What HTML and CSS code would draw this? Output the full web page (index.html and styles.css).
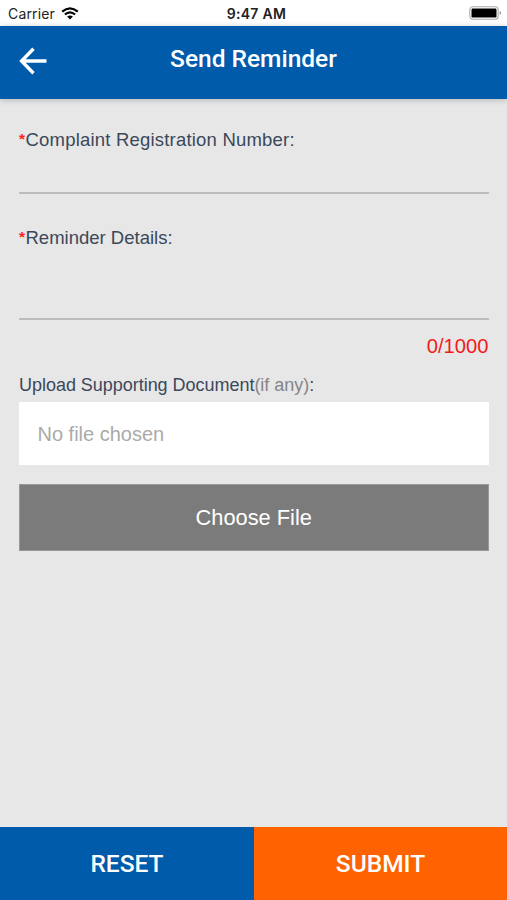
FILE: index.html
```html
<!DOCTYPE html>
<html lang="en">
<head>
<meta charset="utf-8">
<title>Send Reminder</title>
<link rel="stylesheet" href="styles.css">
</head>
<body>
<div class="screen">
  <div class="status">
    <div class="carrier"><span>Carrier</span>
      <svg width="18" height="13" viewBox="0 0 18 13" fill="none" stroke="#000" stroke-width="2.2"><path d="M1.2 4.7Q9-2 16.8 4.7M3.9 7.5Q9 3.1 14.1 7.5"/><path d="M9 12.5L6.1 9.6Q9 7.2 11.9 9.6Z" fill="#000" stroke="none"/></svg>
    </div>
    <time class="time">9:47 AM</time>
    <svg class="battery" width="33" height="14" viewBox="0 0 33 14"><rect x=".8" y=".8" width="28.4" height="12.4" rx="3" fill="#fff" stroke="#aaa" stroke-width="1.1"/><rect x="2.5" y="2.5" width="25" height="9" rx="1.2"/><path d="M30.7 5v4q1.5-.6 1.5-2t-1.5-2" fill="#999"/></svg>
  </div>
  <header class="header">
    <svg class="back" width="29" height="28" viewBox="0 0 29 28" fill="none" stroke="#fff" stroke-width="3.4"><path d="M14.5 1.8L2.6 14l11.9 12.2M2.6 14H27.5"/></svg>
    <h1 class="title">Send Reminder</h1>
  </header>
  <main class="form">
    <label class="label" for="number"><span class="required">*</span><span class="number-label">Complaint Registration Number:</span></label>
    <input class="field" id="number">
    <label class="label" for="details"><span class="required">*</span><span>Reminder Details:</span></label>
    <textarea class="field details" id="details"></textarea>
    <div class="counter">0/1000</div>
    <div class="upload-label"><span class="upload-text">Upload Supporting Document</span><span class="optional">(if any)</span>:</div>
    <div class="file-name">No file chosen</div>
    <button class="choose">Choose File</button>
  </main>
  <footer class="actions">
    <button class="action reset">RESET</button>
    <button class="action submit">SUBMIT</button>
  </footer>
</div>
</body>
</html>
```
FILE: styles.css
```css
* { box-sizing: border-box; }
body { margin: 0; }
button { border: 0; padding: 0; }
.screen {
  width: 507px; height: 900px;
  display: flex; flex-direction: column;
  background: #e7e7e7;
  font-family: "Liberation Sans", Arial, sans-serif;
}
.status {
  height: 26px; flex: none;
  display: grid; grid-template-columns: 1fr auto 1fr; align-items: center;
  padding: 1px 5px 0 8px;
  background: #fff; color: #222;
  font: 14px/20px Inter, sans-serif;
}
.carrier { display: flex; align-items: center; gap: 6px; letter-spacing: .15px; }
.time { font-weight: 600; letter-spacing: .3px; margin-right: -3px; }
.battery { justify-self: end; margin-top: -1px; }
.header {
  height: 73px; flex: none;
  display: grid; grid-template-columns: 60px 1fr 60px; align-items: center;
  background: #005baa; color: #fff;
  box-shadow: 0 1px 6px rgba(0, 0, 0, .22);
}
.back { margin: -3px 0 0 19px; }
.title { margin: 0; padding-bottom: 7px; text-align: center; font: 500 24.5px/32px Roboto, sans-serif; }
.form { flex: 1; display: flex; flex-direction: column; padding: 29px 18.5px 0 19px; }
.label { display: flex; height: 24px; font-size: 18.5px; line-height: 24px; color: #3b4859; }
.required { width: 6.5px; color: #f22; font-size: 15.5px; font-weight: 700; line-height: 22px; }
.number-label { letter-spacing: .2px; }
.field {
  width: 100%; height: 42px; padding: 0; margin: 0 0 32px; resize: none; outline: 0;
  border: 0; border-bottom: 2px solid #bcbcbc; border-radius: 0; background: transparent;
  font: inherit;
}
.details { height: 70px; margin-bottom: 14px; }
.counter { height: 24px; text-align: right; color: #f21b1b; font-size: 20.2px; line-height: 24px; }
.upload-label { height: 24px; margin: 15px 0 5px; color: #3b4859; font-size: 18px; line-height: 24px; letter-spacing: -.03px; white-space: nowrap; }
.optional { color: #858585; }
.file-name { height: 63px; padding-left: 18.5px; background: #fff; color: #aaa; font-size: 20px; line-height: 64px; }
.choose { height: 67px; margin-top: 19px; background: #7b7b7b; border: 1px solid #989898; color: #fff; font: 21.8px/66px "Liberation Sans", Arial, sans-serif; }
.actions { height: 73px; flex: none; display: grid; grid-template-columns: 254px 1fr; }
.action { color: #fff; font: 500 24.5px/74px Roboto, sans-serif; }
.reset { background: #005baa; }
.submit { background: #ff6200; }
```
